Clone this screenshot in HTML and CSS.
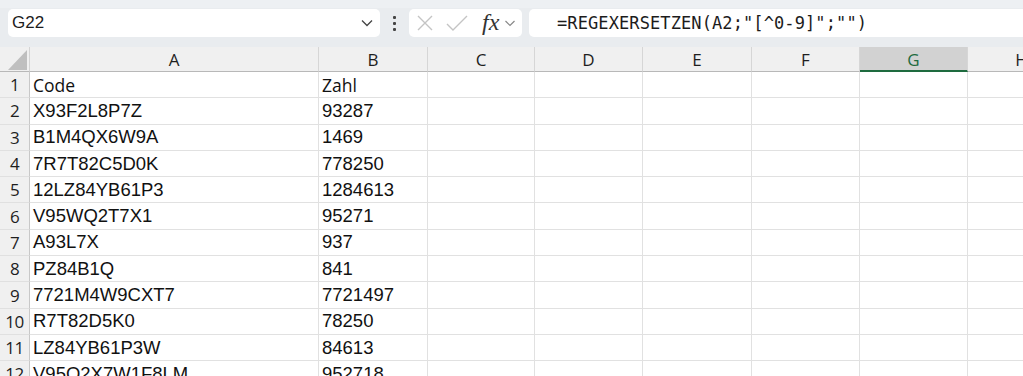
FILE: index.html
```html
<!DOCTYPE html>
<html lang="de">
<head>
<meta charset="utf-8">
<title>Excel</title>
<link rel="stylesheet" href="styles.css">
</head>
<body>
<div class="app">
  <div class="toolbar">
    <div class="namebox">
      <span class="name">G22</span>
      <svg class="chev" width="14" height="10" viewBox="0 0 14 10"><path d="M2 2.5 L7 7.5 L12 2.5" fill="none" stroke="#444" stroke-width="1.3"/></svg>
    </div>
    <div class="dots"><span></span><span></span><span></span></div>
    <div class="fxbox">
      <svg class="ico" width="20" height="20" viewBox="0 0 20 20"><path d="M3 3 L17 17 M17 3 L3 17" stroke="#c4c4c4" stroke-width="1.4" fill="none"/></svg>
      <svg class="ico" width="24" height="20" viewBox="0 0 24 20"><path d="M2 11 L8 17 L22 3" stroke="#c4c4c4" stroke-width="1.4" fill="none"/></svg>
      <span class="fx">fx</span>
      <svg class="chev2" width="12" height="8" viewBox="0 0 12 8"><path d="M1.5 2 L6 6.5 L10.5 2" fill="none" stroke="#888" stroke-width="1.2"/></svg>
    </div>
    <div class="formula">=REGEXERSETZEN(A2;"[^0-9]";"")</div>
  </div>
  <div class="sheet">
    <div class="corner"><svg width="30" height="25" viewBox="0 0 30 25"><polygon points="27,3 27,23 8,23" fill="#bfbfbf"/></svg></div>
    <div class="ch">A</div><div class="ch">B</div><div class="ch">C</div><div class="ch">D</div><div class="ch">E</div><div class="ch">F</div><div class="ch sel">G</div><div class="ch">H</div>

    <div class="rh">1</div><div class="c hd">Code</div><div class="c hd">Zahl</div><div class="c"></div><div class="c"></div><div class="c"></div><div class="c"></div><div class="c"></div><div class="c"></div>
    <div class="rh">2</div><div class="c">X93F2L8P7Z</div><div class="c">93287</div><div class="c"></div><div class="c"></div><div class="c"></div><div class="c"></div><div class="c"></div><div class="c"></div>
    <div class="rh">3</div><div class="c">B1M4QX6W9A</div><div class="c">1469</div><div class="c"></div><div class="c"></div><div class="c"></div><div class="c"></div><div class="c"></div><div class="c"></div>
    <div class="rh">4</div><div class="c">7R7T82C5D0K</div><div class="c">778250</div><div class="c"></div><div class="c"></div><div class="c"></div><div class="c"></div><div class="c"></div><div class="c"></div>
    <div class="rh">5</div><div class="c">12LZ84YB61P3</div><div class="c">1284613</div><div class="c"></div><div class="c"></div><div class="c"></div><div class="c"></div><div class="c"></div><div class="c"></div>
    <div class="rh">6</div><div class="c">V95WQ2T7X1</div><div class="c">95271</div><div class="c"></div><div class="c"></div><div class="c"></div><div class="c"></div><div class="c"></div><div class="c"></div>
    <div class="rh">7</div><div class="c">A93L7X</div><div class="c">937</div><div class="c"></div><div class="c"></div><div class="c"></div><div class="c"></div><div class="c"></div><div class="c"></div>
    <div class="rh">8</div><div class="c">PZ84B1Q</div><div class="c">841</div><div class="c"></div><div class="c"></div><div class="c"></div><div class="c"></div><div class="c"></div><div class="c"></div>
    <div class="rh">9</div><div class="c">7721M4W9CXT7</div><div class="c">7721497</div><div class="c"></div><div class="c"></div><div class="c"></div><div class="c"></div><div class="c"></div><div class="c"></div>
    <div class="rh">10</div><div class="c">R7T82D5K0</div><div class="c">78250</div><div class="c"></div><div class="c"></div><div class="c"></div><div class="c"></div><div class="c"></div><div class="c"></div>
    <div class="rh">11</div><div class="c">LZ84YB61P3W</div><div class="c">84613</div><div class="c"></div><div class="c"></div><div class="c"></div><div class="c"></div><div class="c"></div><div class="c"></div>
    <div class="rh">12</div><div class="c">V95Q2X7W1F8LM</div><div class="c">952718</div><div class="c"></div><div class="c"></div><div class="c"></div><div class="c"></div><div class="c"></div><div class="c"></div>
  </div>
</div>
</body>
</html>
```
FILE: styles.css
```css
* { box-sizing: border-box; }
html, body { margin: 0; padding: 0; }
body {
  width: 1023px;
  height: 376px;
  overflow: hidden;
  background: #ffffff;
  font-family: "Liberation Sans", Arial, sans-serif;
  color: #1a1a1a;
}
.app { width: 1023px; overflow: hidden; }

.toolbar {
  height: 47px;
  background: #e9ecef;
  border-top: 8px solid #edf0f3;
  padding-top: 1px;
  display: flex;
  align-items: flex-start;
}
.namebox {
  margin-left: 8px;
  width: 372px;
  height: 28px;
  background: #fff;
  border-radius: 5px;
  display: flex;
  align-items: center;
  justify-content: space-between;
  padding: 0 6px 0 4px;
}
.name { font-size: 17px; color: #1c1c1c; }
.chev { display: block; }
.dots {
  width: 29px;
  height: 28px;
  display: flex;
  flex-direction: column;
  align-items: center;
  justify-content: center;
  gap: 3px;
}
.dots span { width: 3px; height: 3px; background: #444; border-radius: 1px; }
.fxbox {
  width: 113px;
  height: 28px;
  background: #fff;
  border-radius: 5px;
  display: flex;
  align-items: center;
  padding-left: 6px;
  gap: 10px;
}
.ico { display: block; }
.fx {
  font-family: "Liberation Serif", "DejaVu Serif", serif;
  font-style: italic;
  font-size: 24px;
  color: #333;
  margin-left: 3px;
  line-height: 1;
  margin-top: -3px;
}
.chev2 { display: block; margin-left: -5px; }
.formula {
  margin-left: 7px;
  flex: 1 0 auto;
  height: 28px;
  background: #fff;
  border-radius: 5px 0 0 5px;
  display: flex;
  align-items: center;
  padding-left: 28px;
  font-family: "DejaVu Sans Mono", "Liberation Mono", monospace;
  font-size: 17px;
  letter-spacing: 0.1px;
  color: #1c1c1c;
  white-space: nowrap;
}

.sheet {
  width: 1076px;
  display: grid;
  grid-template-columns: 30px 289px 109px 107px 108px 109px 108px 108px 108px;
  grid-template-rows: 25px repeat(12, 26.3px);
  background: #fff;
}
.corner {
  background: #f0f0f0;
  border-bottom: 1px solid #b8b8b8;
  border-right: 1px solid #d4d4d4;
  position: relative;
}
.corner svg { display: block; position: absolute; left: 0; top: 0; }
.ch {
  background: #f0f0f0;
  border-bottom: 1px solid #b8b8b8;
  border-right: 1px solid #d6d6d6;
  display: flex;
  align-items: center;
  justify-content: center;
  font-family: "Open Sans", "Noto Sans", sans-serif;
  font-size: 17px;
  color: #1e1e1e;
  white-space: nowrap;
  overflow: hidden;
}
.ch.sel {
  background: #d2d2d2;
  border-bottom: 2px solid #1e6b3f;
  color: #1e6b3f;
  padding-top: 1px;
}
.rh {
  background: #f0f0f0;
  border-right: 1px solid #c8c8c8;
  border-bottom: 1px solid #e0e0e0;
  display: flex;
  align-items: center;
  justify-content: center;
  font-family: "Open Sans", "Noto Sans", sans-serif;
  font-size: 17px;
  color: #1e1e1e;
  letter-spacing: -0.5px;
}
.c {
  border-right: 1px solid #e1e1e1;
  border-bottom: 1px solid #e1e1e1;
  display: flex;
  align-items: center;
  padding-left: 3px;
  font-size: 18.5px;
  color: #111;
  white-space: nowrap;
  overflow: hidden;
}
.c.hd {
  font-family: "Open Sans", "Noto Sans", sans-serif;
  font-size: 17.5px;
}
```
